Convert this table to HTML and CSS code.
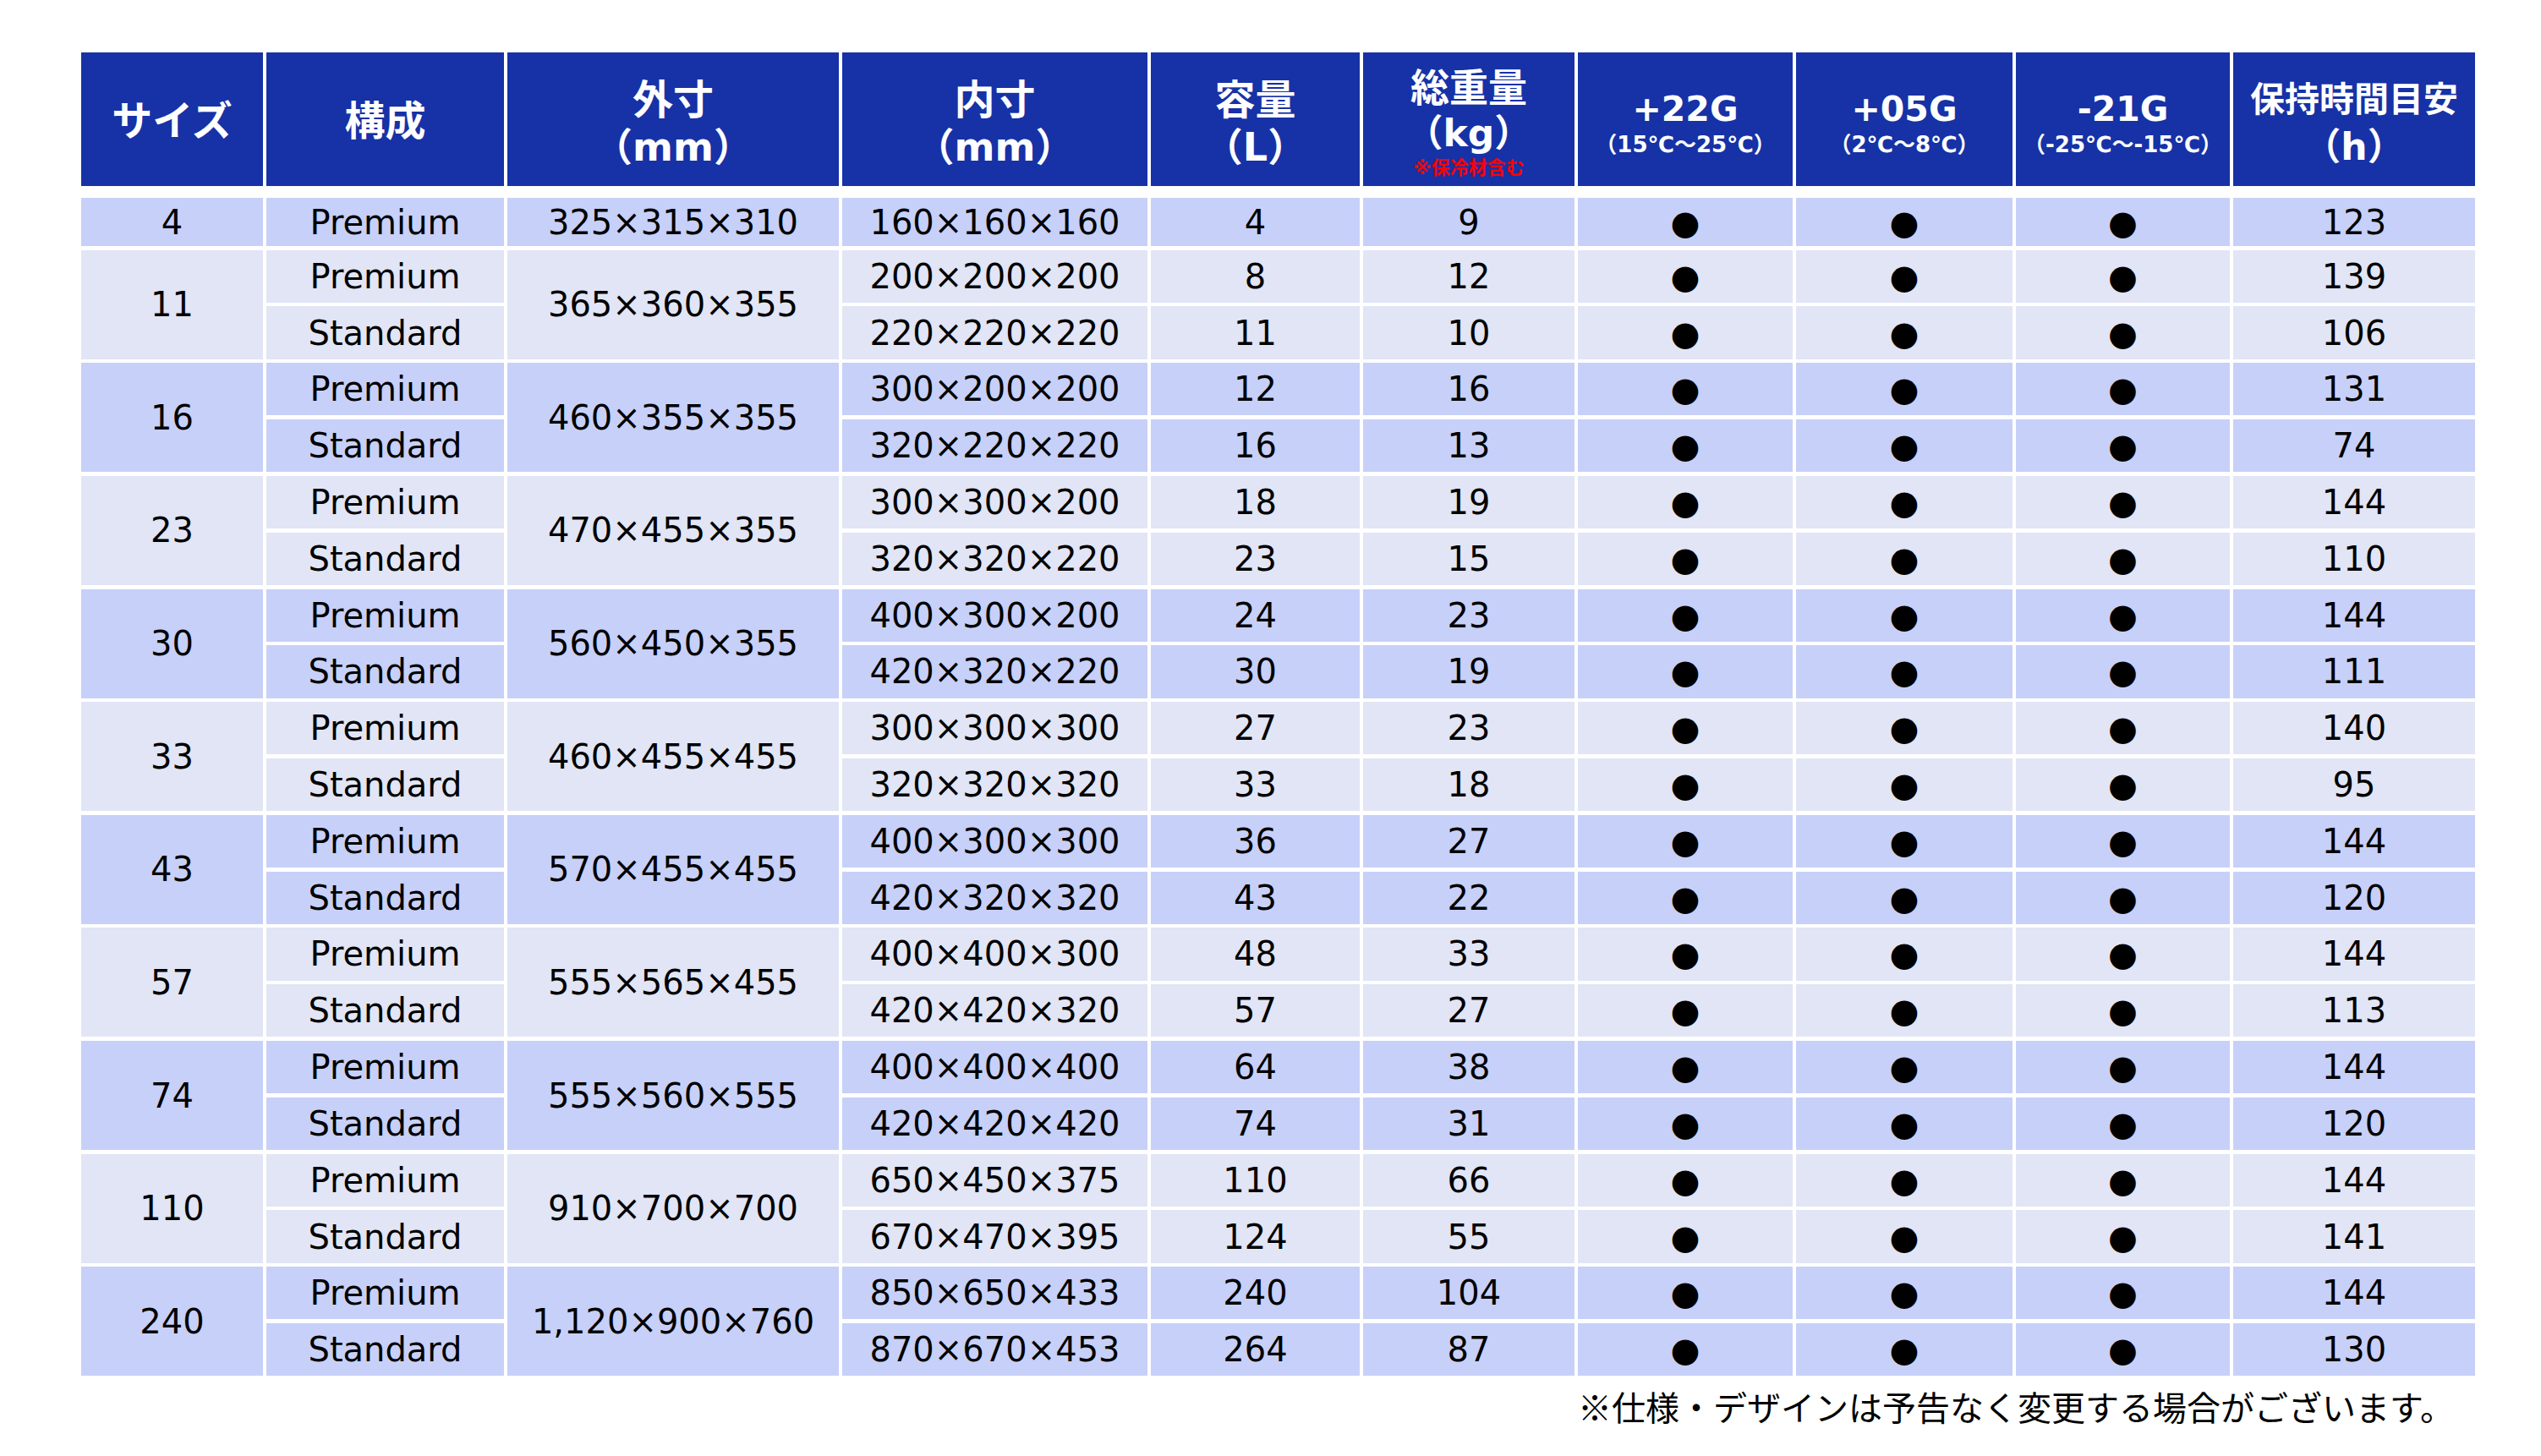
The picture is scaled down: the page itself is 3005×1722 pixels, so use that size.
FILE: index.html
```html
<!DOCTYPE html>
<html lang="ja">
<head>
<meta charset="utf-8">
<title>サイズ表</title>
<link rel="stylesheet" href="styles.css">
</head>
<body>
<div class="page">
  <div class="head">
    <div class="h one"><div class="l1">サイズ</div></div>
    <div class="h one"><div class="l1">構成</div></div>
    <div class="h two"><div class="l1">外寸</div><div class="l2">（mm）</div></div>
    <div class="h two"><div class="l1">内寸</div><div class="l2">（mm）</div></div>
    <div class="h two"><div class="l1">容量</div><div class="l2">（L）</div></div>
    <div class="h three"><div class="l1">総重量</div><div class="l2">（kg）</div><div class="note">※保冷材含む</div></div>
    <div class="h temp"><div class="t1">+22G</div><div class="t2">（15℃～25℃）</div></div>
    <div class="h temp"><div class="t1">+05G</div><div class="t2">（2℃～8℃）</div></div>
    <div class="h temp"><div class="t1">-21G</div><div class="t2">（-25℃～-15℃）</div></div>
    <div class="h two small"><div class="l1">保持時間目安</div><div class="l2">（h）</div></div>
  </div>

  <div class="body">
    <div class="grp dark single">
      <div class="c">4</div><div class="c">Premium</div><div class="c">325×315×310</div>
      <div class="c">160×160×160</div><div class="c">4</div><div class="c">9</div>
      <div class="c b">●</div><div class="c b">●</div><div class="c b">●</div><div class="c">123</div>
    </div>

    <div class="grp light">
      <div class="c span">11</div><div class="c">Premium</div><div class="c span">365×360×355</div>
      <div class="c">200×200×200</div><div class="c">8</div><div class="c">12</div>
      <div class="c b">●</div><div class="c b">●</div><div class="c b">●</div><div class="c">139</div>
      <div class="c">Standard</div>
      <div class="c">220×220×220</div><div class="c">11</div><div class="c">10</div>
      <div class="c b">●</div><div class="c b">●</div><div class="c b">●</div><div class="c">106</div>
    </div>

    <div class="grp dark">
      <div class="c span">16</div><div class="c">Premium</div><div class="c span">460×355×355</div>
      <div class="c">300×200×200</div><div class="c">12</div><div class="c">16</div>
      <div class="c b">●</div><div class="c b">●</div><div class="c b">●</div><div class="c">131</div>
      <div class="c">Standard</div>
      <div class="c">320×220×220</div><div class="c">16</div><div class="c">13</div>
      <div class="c b">●</div><div class="c b">●</div><div class="c b">●</div><div class="c">74</div>
    </div>

    <div class="grp light">
      <div class="c span">23</div><div class="c">Premium</div><div class="c span">470×455×355</div>
      <div class="c">300×300×200</div><div class="c">18</div><div class="c">19</div>
      <div class="c b">●</div><div class="c b">●</div><div class="c b">●</div><div class="c">144</div>
      <div class="c">Standard</div>
      <div class="c">320×320×220</div><div class="c">23</div><div class="c">15</div>
      <div class="c b">●</div><div class="c b">●</div><div class="c b">●</div><div class="c">110</div>
    </div>

    <div class="grp dark">
      <div class="c span">30</div><div class="c">Premium</div><div class="c span">560×450×355</div>
      <div class="c">400×300×200</div><div class="c">24</div><div class="c">23</div>
      <div class="c b">●</div><div class="c b">●</div><div class="c b">●</div><div class="c">144</div>
      <div class="c">Standard</div>
      <div class="c">420×320×220</div><div class="c">30</div><div class="c">19</div>
      <div class="c b">●</div><div class="c b">●</div><div class="c b">●</div><div class="c">111</div>
    </div>

    <div class="grp light">
      <div class="c span">33</div><div class="c">Premium</div><div class="c span">460×455×455</div>
      <div class="c">300×300×300</div><div class="c">27</div><div class="c">23</div>
      <div class="c b">●</div><div class="c b">●</div><div class="c b">●</div><div class="c">140</div>
      <div class="c">Standard</div>
      <div class="c">320×320×320</div><div class="c">33</div><div class="c">18</div>
      <div class="c b">●</div><div class="c b">●</div><div class="c b">●</div><div class="c">95</div>
    </div>

    <div class="grp dark">
      <div class="c span">43</div><div class="c">Premium</div><div class="c span">570×455×455</div>
      <div class="c">400×300×300</div><div class="c">36</div><div class="c">27</div>
      <div class="c b">●</div><div class="c b">●</div><div class="c b">●</div><div class="c">144</div>
      <div class="c">Standard</div>
      <div class="c">420×320×320</div><div class="c">43</div><div class="c">22</div>
      <div class="c b">●</div><div class="c b">●</div><div class="c b">●</div><div class="c">120</div>
    </div>

    <div class="grp light">
      <div class="c span">57</div><div class="c">Premium</div><div class="c span">555×565×455</div>
      <div class="c">400×400×300</div><div class="c">48</div><div class="c">33</div>
      <div class="c b">●</div><div class="c b">●</div><div class="c b">●</div><div class="c">144</div>
      <div class="c">Standard</div>
      <div class="c">420×420×320</div><div class="c">57</div><div class="c">27</div>
      <div class="c b">●</div><div class="c b">●</div><div class="c b">●</div><div class="c">113</div>
    </div>

    <div class="grp dark">
      <div class="c span">74</div><div class="c">Premium</div><div class="c span">555×560×555</div>
      <div class="c">400×400×400</div><div class="c">64</div><div class="c">38</div>
      <div class="c b">●</div><div class="c b">●</div><div class="c b">●</div><div class="c">144</div>
      <div class="c">Standard</div>
      <div class="c">420×420×420</div><div class="c">74</div><div class="c">31</div>
      <div class="c b">●</div><div class="c b">●</div><div class="c b">●</div><div class="c">120</div>
    </div>

    <div class="grp light">
      <div class="c span">110</div><div class="c">Premium</div><div class="c span">910×700×700</div>
      <div class="c">650×450×375</div><div class="c">110</div><div class="c">66</div>
      <div class="c b">●</div><div class="c b">●</div><div class="c b">●</div><div class="c">144</div>
      <div class="c">Standard</div>
      <div class="c">670×470×395</div><div class="c">124</div><div class="c">55</div>
      <div class="c b">●</div><div class="c b">●</div><div class="c b">●</div><div class="c">141</div>
    </div>

    <div class="grp dark">
      <div class="c span">240</div><div class="c">Premium</div><div class="c span">1,120×900×760</div>
      <div class="c">850×650×433</div><div class="c">240</div><div class="c">104</div>
      <div class="c b">●</div><div class="c b">●</div><div class="c b">●</div><div class="c">144</div>
      <div class="c">Standard</div>
      <div class="c">870×670×453</div><div class="c">264</div><div class="c">87</div>
      <div class="c b">●</div><div class="c b">●</div><div class="c b">●</div><div class="c">130</div>
    </div>
  </div>

  <p class="foot">※仕様・デザインは予告なく変更する場合がございます。</p>
</div>
</body>
</html>
```

FILE: styles.css
```css
html, body {
  margin: 0;
  padding: 0;
  background: #ffffff;
}

.page {
  width: 2831px;
  padding: 62px 0 0 96px;
  font-family: "DejaVu Sans", "Noto Sans CJK JP", sans-serif;
  color: #000;
}

.head,
.grp {
  display: grid;
  grid-template-columns: 215px 281px 392px 361px 247px 250px 254px 256px 253px 286px;
  column-gap: 4px;
}

.head {
  height: 158px;
}

.h {
  background: #1632a6;
  color: #ffffff;
  font-weight: bold;
  display: flex;
  flex-direction: column;
  align-items: center;
  justify-content: center;
  text-align: center;
  white-space: nowrap;
}

.h .l1 {
  font-size: 48px;
  line-height: 56px;
}

.h .l2 {
  font-size: 46px;
  line-height: 56px;
}

.h.one {
  padding-top: 3px;
}

.h.two {
  padding-top: 10px;
}

.h.small .l1 {
  font-size: 41px;
}

.h.small .l2 {
  font-size: 44px;
}

.h.three {
  padding-top: 8px;
}

.h.three .l1 {
  font-size: 46px;
  line-height: 54px;
}

.h.three .l2 {
  font-size: 44px;
  line-height: 54px;
}

.h .note {
  color: #ff0000;
  font-size: 22px;
  line-height: 28px;
}

.h.temp {
  padding-top: 12px;
}

.h .t1 {
  font-size: 41px;
  line-height: 48px;
}

.h .t2 {
  font-size: 26px;
  line-height: 36px;
}

.body {
  margin-top: 14px;
  display: flex;
  flex-direction: column;
  gap: 4.67px;
}

.grp {
  grid-auto-rows: 62.17px;
  row-gap: 4.67px;
}

.grp.single {
  grid-auto-rows: 57px;
}

.grp.dark .c {
  background: #c7d0f8;
}

.grp.light .c {
  background: #e1e5f5;
}

.c {
  display: flex;
  align-items: center;
  justify-content: center;
  font-size: 40px;
  white-space: nowrap;
}

.c.span {
  grid-row: span 2;
}

.c.b {
  font-size: 40px;
}

.foot {
  margin: 13px 0 0 0;
  padding-right: 25px;
  text-align: right;
  font-family: "Noto Sans CJK JP", sans-serif;
  font-size: 40px;
  line-height: 46px;
}
```
